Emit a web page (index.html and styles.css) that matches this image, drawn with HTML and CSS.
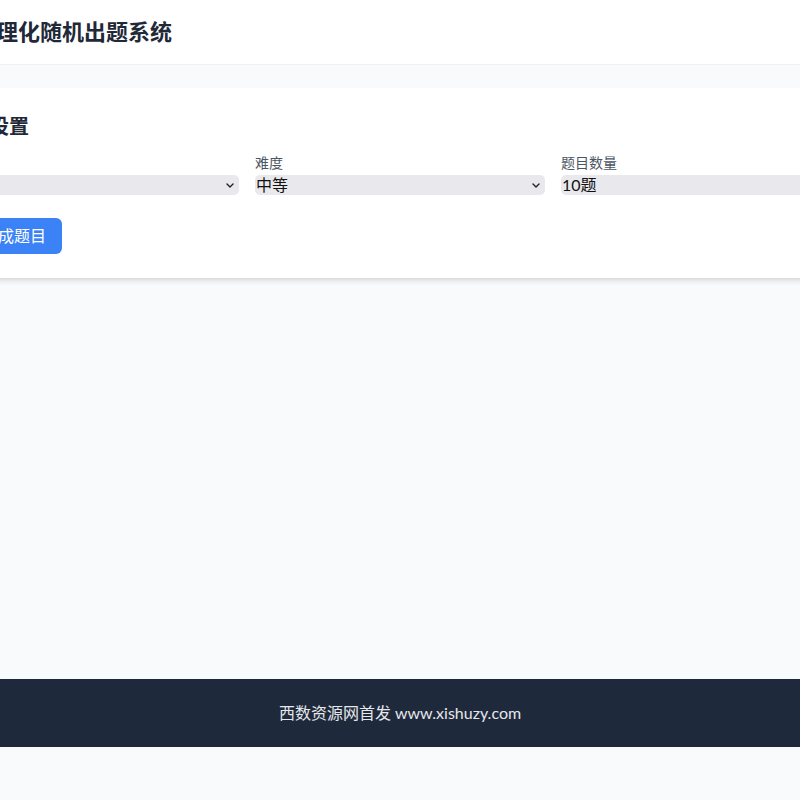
FILE: index.html
```html
<!DOCTYPE html>
<html lang="zh-CN">
<head>
    <meta charset="UTF-8">
    <meta name="viewport" content="width=device-width, initial-scale=1.0">
    <title>数理化随机出题系统</title>
    <link rel="stylesheet" href="styles.css">
</head>
<body>
    <header class="header">
        <div class="header-inner">
            <h1>数理化随机出题系统</h1>
        </div>
    </header>

    <main class="main">
        <div class="card">
            <h2>出题设置</h2>
            <div class="form-grid">
                <div class="field">
                    <label for="subject">学科</label>
                    <select id="subject">
                        <option>数学</option>
                        <option>物理</option>
                        <option>化学</option>
                    </select>
                </div>
                <div class="field">
                    <label for="level">难度</label>
                    <select id="level">
                        <option>简单</option>
                        <option selected>中等</option>
                        <option>困难</option>
                    </select>
                </div>
                <div class="field">
                    <label for="count">题目数量</label>
                    <select id="count">
                        <option>5题</option>
                        <option selected>10题</option>
                        <option>20题</option>
                    </select>
                </div>
            </div>
            <div class="actions">
                <button class="btn">生成题目</button>
            </div>
        </div>
    </main>

    <footer class="footer">
        <p>西数资源网首发 www.xishuzy.com</p>
    </footer>
</body>
</html>
```

FILE: styles.css
```css
* {
    box-sizing: border-box;
}
body {
    margin: 0;
    background: #f9fafb;
    font-family: Lato, "Noto Sans CJK SC", sans-serif;
    line-height: 1.5;
    color: #1f2937;
}

/* 顶部 */
.header {
    display: flex;
    justify-content: center;
    background: #fff;
    border-bottom: 1px solid #eef0f3;
}
.header-inner {
    flex: none;
    width: 900px;
    padding: 16px 24px;
}
.header h1 {
    margin: 0;
    font-size: 22px;
    line-height: 32px;
    font-weight: 700;
    color: #1f2937;
}

/* 主体 */
.main {
    display: flex;
    justify-content: center;
    align-items: flex-start;
    min-height: 614px;
    padding-top: 23px;
}
.card {
    flex: none;
    width: 950px;
    background: #fff;
    padding: 24px;
    box-shadow: 0 4px 6px -1px rgba(0,0,0,0.1), 0 2px 4px -2px rgba(0,0,0,0.1);
}
.card h2 {
    margin: 0 0 13px;
    font-size: 20px;
    line-height: 28px;
    font-weight: 700;
}
.form-grid {
    display: grid;
    grid-template-columns: repeat(3, 1fr);
    gap: 16px;
}
.field label {
    display: block;
    font-size: 14px;
    line-height: 20px;
    color: #4b5563;
    margin-bottom: 2px;
}
.field select {
    display: block;
    width: 100%;
    height: 20px;
    border: 0;
    border-radius: 5px;
    margin: 0;
    padding: 0 20px 0 1px;
    font-family: inherit;
    font-size: 16px;
    line-height: 20px;
    color: #111;
    appearance: none;
    background-color: #e9e9ed;
    background-image: url("data:image/svg+xml,%3Csvg xmlns='http://www.w3.org/2000/svg' width='8' height='5' viewBox='0 0 8 5'%3E%3Cpath d='M1 1l3 3 3-3' fill='none' stroke='%23222' stroke-width='1.4' stroke-linecap='round' stroke-linejoin='round'/%3E%3C/svg%3E");
    background-repeat: no-repeat;
    background-position: right 5px center;
}
.actions {
    margin-top: 23px;
    padding-left: 17px;
}
.btn {
    background: #3b82f6;
    color: #fff;
    border: 0;
    border-radius: 6px;
    padding: 6px 16px;
    font-family: inherit;
    font-size: 16px;
    line-height: 24px;
    cursor: pointer;
}
.btn:hover {
    background: #2563eb;
}

/* 底部 */
.footer {
    background: #1e293b;
    color: #e5e7eb;
    text-align: center;
    padding: 22px 0;
}
.footer p {
    margin: 0;
    font-size: 16px;
    line-height: 24px;
}
```
